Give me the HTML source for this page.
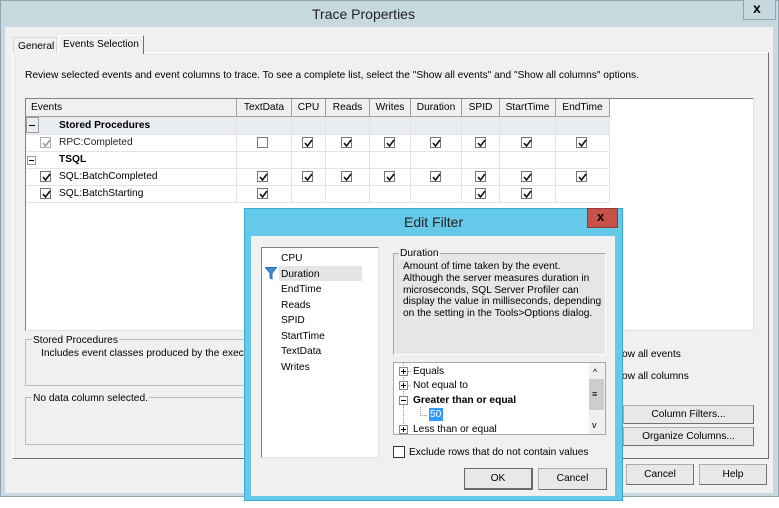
<!DOCTYPE html>
<html><head><meta charset="utf-8"><style>
*{box-sizing:border-box;margin:0;padding:0}
body{width:779px;height:508px;overflow:hidden;background:#fff;font-family:"Liberation Sans",sans-serif;font-size:10.2px;color:#000;position:relative}
.a{position:absolute}
.t{position:absolute;white-space:nowrap;line-height:13px}
.cb{position:absolute;width:11px;height:11px;border:1px solid #777;background:#fff}
.cb svg{position:absolute;left:1px;top:1px}
.btn{position:absolute;background:#e8e8e8;border:1px solid #adadad;border-right-color:#707070;border-bottom-color:#707070;text-align:center;line-height:17px}
.hd{position:absolute;top:99px;height:18px;border-right:1px solid #a0a0a0;border-bottom:1px solid #a0a0a0;background:#f0f0f0;text-align:center;line-height:17px}
</style></head><body>
<div class="a" style="left:0;top:0;width:779px;height:497px;background:#c6d9df;border:1px solid #8fa4ad"></div>
<div class="t" style="left:312px;top:6px;font-size:14px;line-height:16px;color:#222">Trace Properties</div>
<div class="a" style="left:743px;top:0;width:33px;height:20px;border:1px solid #8fa4ad;border-top:none;background:#c6d9df"></div>
<div class="t" style="left:753px;top:2px;font-size:14px;font-weight:bold">x</div>
<div class="a" style="left:5px;top:27px;width:768px;height:466px;background:#f0f0f0"></div>
<div class="a" style="left:12px;top:52px;width:757px;height:407px;border:1px solid #fff;border-right-color:#707070;border-bottom-color:#707070"></div>
<div class="a" style="left:13px;top:37px;width:44px;height:16px;border:1px solid #d9d9d9;border-bottom:none;background:#f0f0f0"></div>
<div class="t" style="left:18px;top:40px">General</div>
<div class="a" style="left:58px;top:35px;width:86px;height:19px;border:1px solid #fff;border-right:1px solid #707070;border-bottom:none;background:#f0f0f0"></div>
<div class="t" style="left:63px;top:38px">Events Selection</div>
<div class="t" style="left:25px;top:69px">Review selected events and event columns to trace. To see a complete list, select the "Show all events" and "Show all columns" options.</div>
<div class="a" style="left:25px;top:98px;width:729px;height:233px;background:#fff;border:1px solid #828282;border-right-color:#e0e0e0;border-bottom-color:#e0e0e0"></div>
<div class="hd" style="left:26px;width:211px;text-align:left;padding-left:5px">Events</div>
<div class="hd" style="left:237px;width:55px">TextData</div>
<div class="hd" style="left:292px;width:34px">CPU</div>
<div class="hd" style="left:326px;width:44px">Reads</div>
<div class="hd" style="left:370px;width:41px">Writes</div>
<div class="hd" style="left:411px;width:51px">Duration</div>
<div class="hd" style="left:462px;width:38px">SPID</div>
<div class="hd" style="left:500px;width:56px">StartTime</div>
<div class="hd" style="left:556px;width:54px">EndTime</div>
<div class="a" style="left:26px;top:117px;width:584px;height:17px;background:#e9edf1"></div>
<svg class="a" style="left:26px;top:117px" width="584" height="86">
<g stroke="#e4e4e4" stroke-width="1">
<line x1="0" y1="17.5" x2="584" y2="17.5"/><line x1="0" y1="34.5" x2="584" y2="34.5"/><line x1="0" y1="51.5" x2="584" y2="51.5"/><line x1="0" y1="68.5" x2="584" y2="68.5"/><line x1="0" y1="85.5" x2="584" y2="85.5"/>
<line x1="210.5" y1="0" x2="210.5" y2="86"/><line x1="265.5" y1="0" x2="265.5" y2="86"/><line x1="299.5" y1="0" x2="299.5" y2="86"/><line x1="343.5" y1="0" x2="343.5" y2="86"/><line x1="384.5" y1="0" x2="384.5" y2="86"/><line x1="435.5" y1="0" x2="435.5" y2="86"/><line x1="473.5" y1="0" x2="473.5" y2="86"/><line x1="529.5" y1="0" x2="529.5" y2="86"/><line x1="583.5" y1="0" x2="583.5" y2="86"/>
</g>
<rect x="0.5" y="0.5" width="12" height="15" fill="none" stroke="#555" stroke-dasharray="1,1"/>
<line x1="3" y1="8.5" x2="9" y2="8.5" stroke="#000"/>
<rect x="1.5" y="39.5" width="8" height="8" fill="none" stroke="#999"/>
<line x1="3" y1="43.5" x2="8" y2="43.5" stroke="#000"/>
</svg>
<div class="t" style="left:59px;top:119px;font-weight:bold">Stored Procedures</div>
<div class="t" style="left:59px;top:136px;color:#222">RPC:Completed</div>
<div class="t" style="left:59px;top:153px;font-weight:bold">TSQL</div>
<div class="t" style="left:59px;top:170px">SQL:BatchCompleted</div>
<div class="t" style="left:59px;top:187px">SQL:BatchStarting</div>
<div id="checks"></div>
<div class="a" style="left:25px;top:339px;width:230px;height:47px;border:1px solid #bcbcbc;border-right:none"></div>
<div class="t" style="left:32px;top:334px;background:#f0f0f0;padding:0 1px">Stored Procedures</div>
<div class="t" style="left:41px;top:347px">Includes event classes produced by the execu</div>
<div class="a" style="left:25px;top:397px;width:230px;height:48px;border:1px solid #bcbcbc;border-right:none"></div>
<div class="t" style="left:32px;top:392px;background:#f0f0f0;padding:0 1px">No data column selected.</div>
<div class="t" style="left:622px;top:348px">ow all events</div>
<div class="t" style="left:622px;top:370px">ow all columns</div>
<div class="btn" style="left:623px;top:405px;width:131px;height:19px">Column Filters...</div>
<div class="btn" style="left:623px;top:427px;width:131px;height:19px">Organize Columns...</div>
<div class="btn" style="left:626px;top:464px;width:68px;height:21px;line-height:19px">Cancel</div>
<div class="btn" style="left:699px;top:464px;width:68px;height:21px;line-height:19px">Help</div>
<!-- Edit Filter dialog -->
<div class="a" style="left:244px;top:208px;width:379px;height:293px;background:#65c9ea;border:1px solid #3aa8cf"></div>
<div class="t" style="left:404px;top:214px;font-size:14px;line-height:16px;color:#222">Edit Filter</div>
<div class="a" style="left:587px;top:208px;width:31px;height:20px;background:#c7524a;border:1px solid #8e3a33"></div>
<div class="t" style="left:597px;top:210px;font-size:13px;font-weight:bold">x</div>
<div class="a" style="left:251px;top:236px;width:364px;height:260px;background:#f0f0f0"></div>
<div class="a" style="left:261px;top:247px;width:118px;height:211px;background:#fff;border:1px solid #828282;border-right-color:#e0e0e0;border-bottom-color:#e0e0e0"></div>
<div class="a" style="left:279px;top:266px;width:83px;height:15px;background:#e5e5e5"></div>
<svg class="a" style="left:265px;top:267px" width="12" height="13"><path d="M0.5 0.5H11.5L7 6V12L5 11V6Z" fill="#3b8fd8" stroke="#2a6fb5"/></svg>
<div class="t" style="left:281px;top:252px">CPU</div>
<div class="t" style="left:281px;top:268px">Duration</div>
<div class="t" style="left:281px;top:283px">EndTime</div>
<div class="t" style="left:281px;top:299px">Reads</div>
<div class="t" style="left:281px;top:314px">SPID</div>
<div class="t" style="left:281px;top:330px">StartTime</div>
<div class="t" style="left:281px;top:345px">TextData</div>
<div class="t" style="left:281px;top:361px">Writes</div>
<div class="a" style="left:393px;top:253px;width:213px;height:102px;background:#e6e6e6;border:1px solid #a8a8a8;border-right-color:#fff;border-bottom-color:#fff"></div>
<div class="t" style="left:399px;top:247px;background:#f0f0f0;padding:0 1px">Duration</div>
<div class="t" style="left:403px;top:261px;line-height:11.8px">Amount of time taken by the event.<br>Although the server measures duration in<br>microseconds, SQL Server Profiler can<br>display the value in milliseconds, depending<br>on the setting in the Tools&gt;Options dialog.</div>
<div class="a" style="left:393px;top:362px;width:213px;height:73px;background:#fff;border:1px solid #a8a8a8;overflow:hidden"></div>
<svg class="a" style="left:397px;top:363px" width="200" height="71">
<g stroke="#999" stroke-dasharray="1,1"><line x1="6.5" y1="0" x2="6.5" y2="71"/><line x1="23.5" y1="44" x2="23.5" y2="53"/><line x1="23" y1="52.5" x2="31" y2="52.5"/><line x1="11" y1="8.5" x2="15" y2="8.5"/><line x1="11" y1="22.5" x2="15" y2="22.5"/></g>
<g fill="#fff" stroke="#888"><rect x="2.5" y="4.5" width="8" height="8"/><rect x="2.5" y="18.5" width="8" height="8"/><rect x="2.5" y="33.5" width="8" height="8"/><rect x="2.5" y="62.5" width="8" height="8"/></g>
<g stroke="#000"><line x1="4" y1="8.5" x2="9" y2="8.5"/><line x1="6.5" y1="6" x2="6.5" y2="11"/><line x1="4" y1="22.5" x2="9" y2="22.5"/><line x1="6.5" y1="20" x2="6.5" y2="25"/><line x1="4" y1="37.5" x2="9" y2="37.5"/><line x1="4" y1="66.5" x2="9" y2="66.5"/><line x1="6.5" y1="64" x2="6.5" y2="69"/></g>
</svg>
<div class="t" style="left:413px;top:365px">Equals</div>
<div class="t" style="left:413px;top:379px">Not equal to</div>
<div class="t" style="left:413px;top:394px;font-weight:bold">Greater than or equal</div>
<div class="a" style="left:429px;top:408px;width:14px;height:13px;background:#3399ff"></div>
<div class="t" style="left:430px;top:408px;color:#fff">50</div>
<div class="t" style="left:413px;top:423px">Less than or equal</div>
<div class="a" style="left:589px;top:363px;width:16px;height:71px;background:#f0f0f0"></div>
<div class="a" style="left:589px;top:379px;width:15px;height:31px;background:#cdcdcd"></div>
<div class="t" style="left:593px;top:366px;font-size:9px">^</div>
<div class="t" style="left:592px;top:388px;font-size:9px">≡</div>
<div class="t" style="left:592px;top:419px;font-size:9px">v</div>
<div class="cb" style="left:393px;top:446px;width:12px;height:12px;border-color:#333"></div>
<div class="t" style="left:409px;top:446px">Exclude rows that do not contain values</div>
<div class="btn" style="left:464px;top:468px;width:69px;height:22px;line-height:20px;border:2px solid #6a6a6a;border-width:1px 2px 2px 1px">OK</div>
<div class="btn" style="left:538px;top:468px;width:69px;height:22px;line-height:20px">Cancel</div>
<script>
var cols=[263,308,347,390,436,481,527,582];
var rows=[[137,[0,1,1,1,1,1,1,1]],[171,[1,1,1,1,1,1,1,1]],[188,[1,0,0,0,0,1,1,0]]];
var h='';
function cb(x,y,c,g){return '<div class="cb" style="left:'+x+'px;top:'+y+'px;border-color:'+(g?'#aaa':'#777')+'">'+(c?'<svg width="9" height="9"><path d="M1 4L3.5 7L8 1" fill="none" stroke="'+(g?'#999':'#111')+'" stroke-width="1.6"/></svg>':'')+'</div>';}
rows.forEach(function(r){r[1].forEach(function(v,i){if(v||r[0]==137&&i==0)h+=cb(cols[i]-6,r[0],v,0);});});
h+=cb(40,137,1,1);h+=cb(40,171,1,0);h+=cb(40,188,1,0);
document.getElementById('checks').innerHTML=h;
</script>
</body></html>
